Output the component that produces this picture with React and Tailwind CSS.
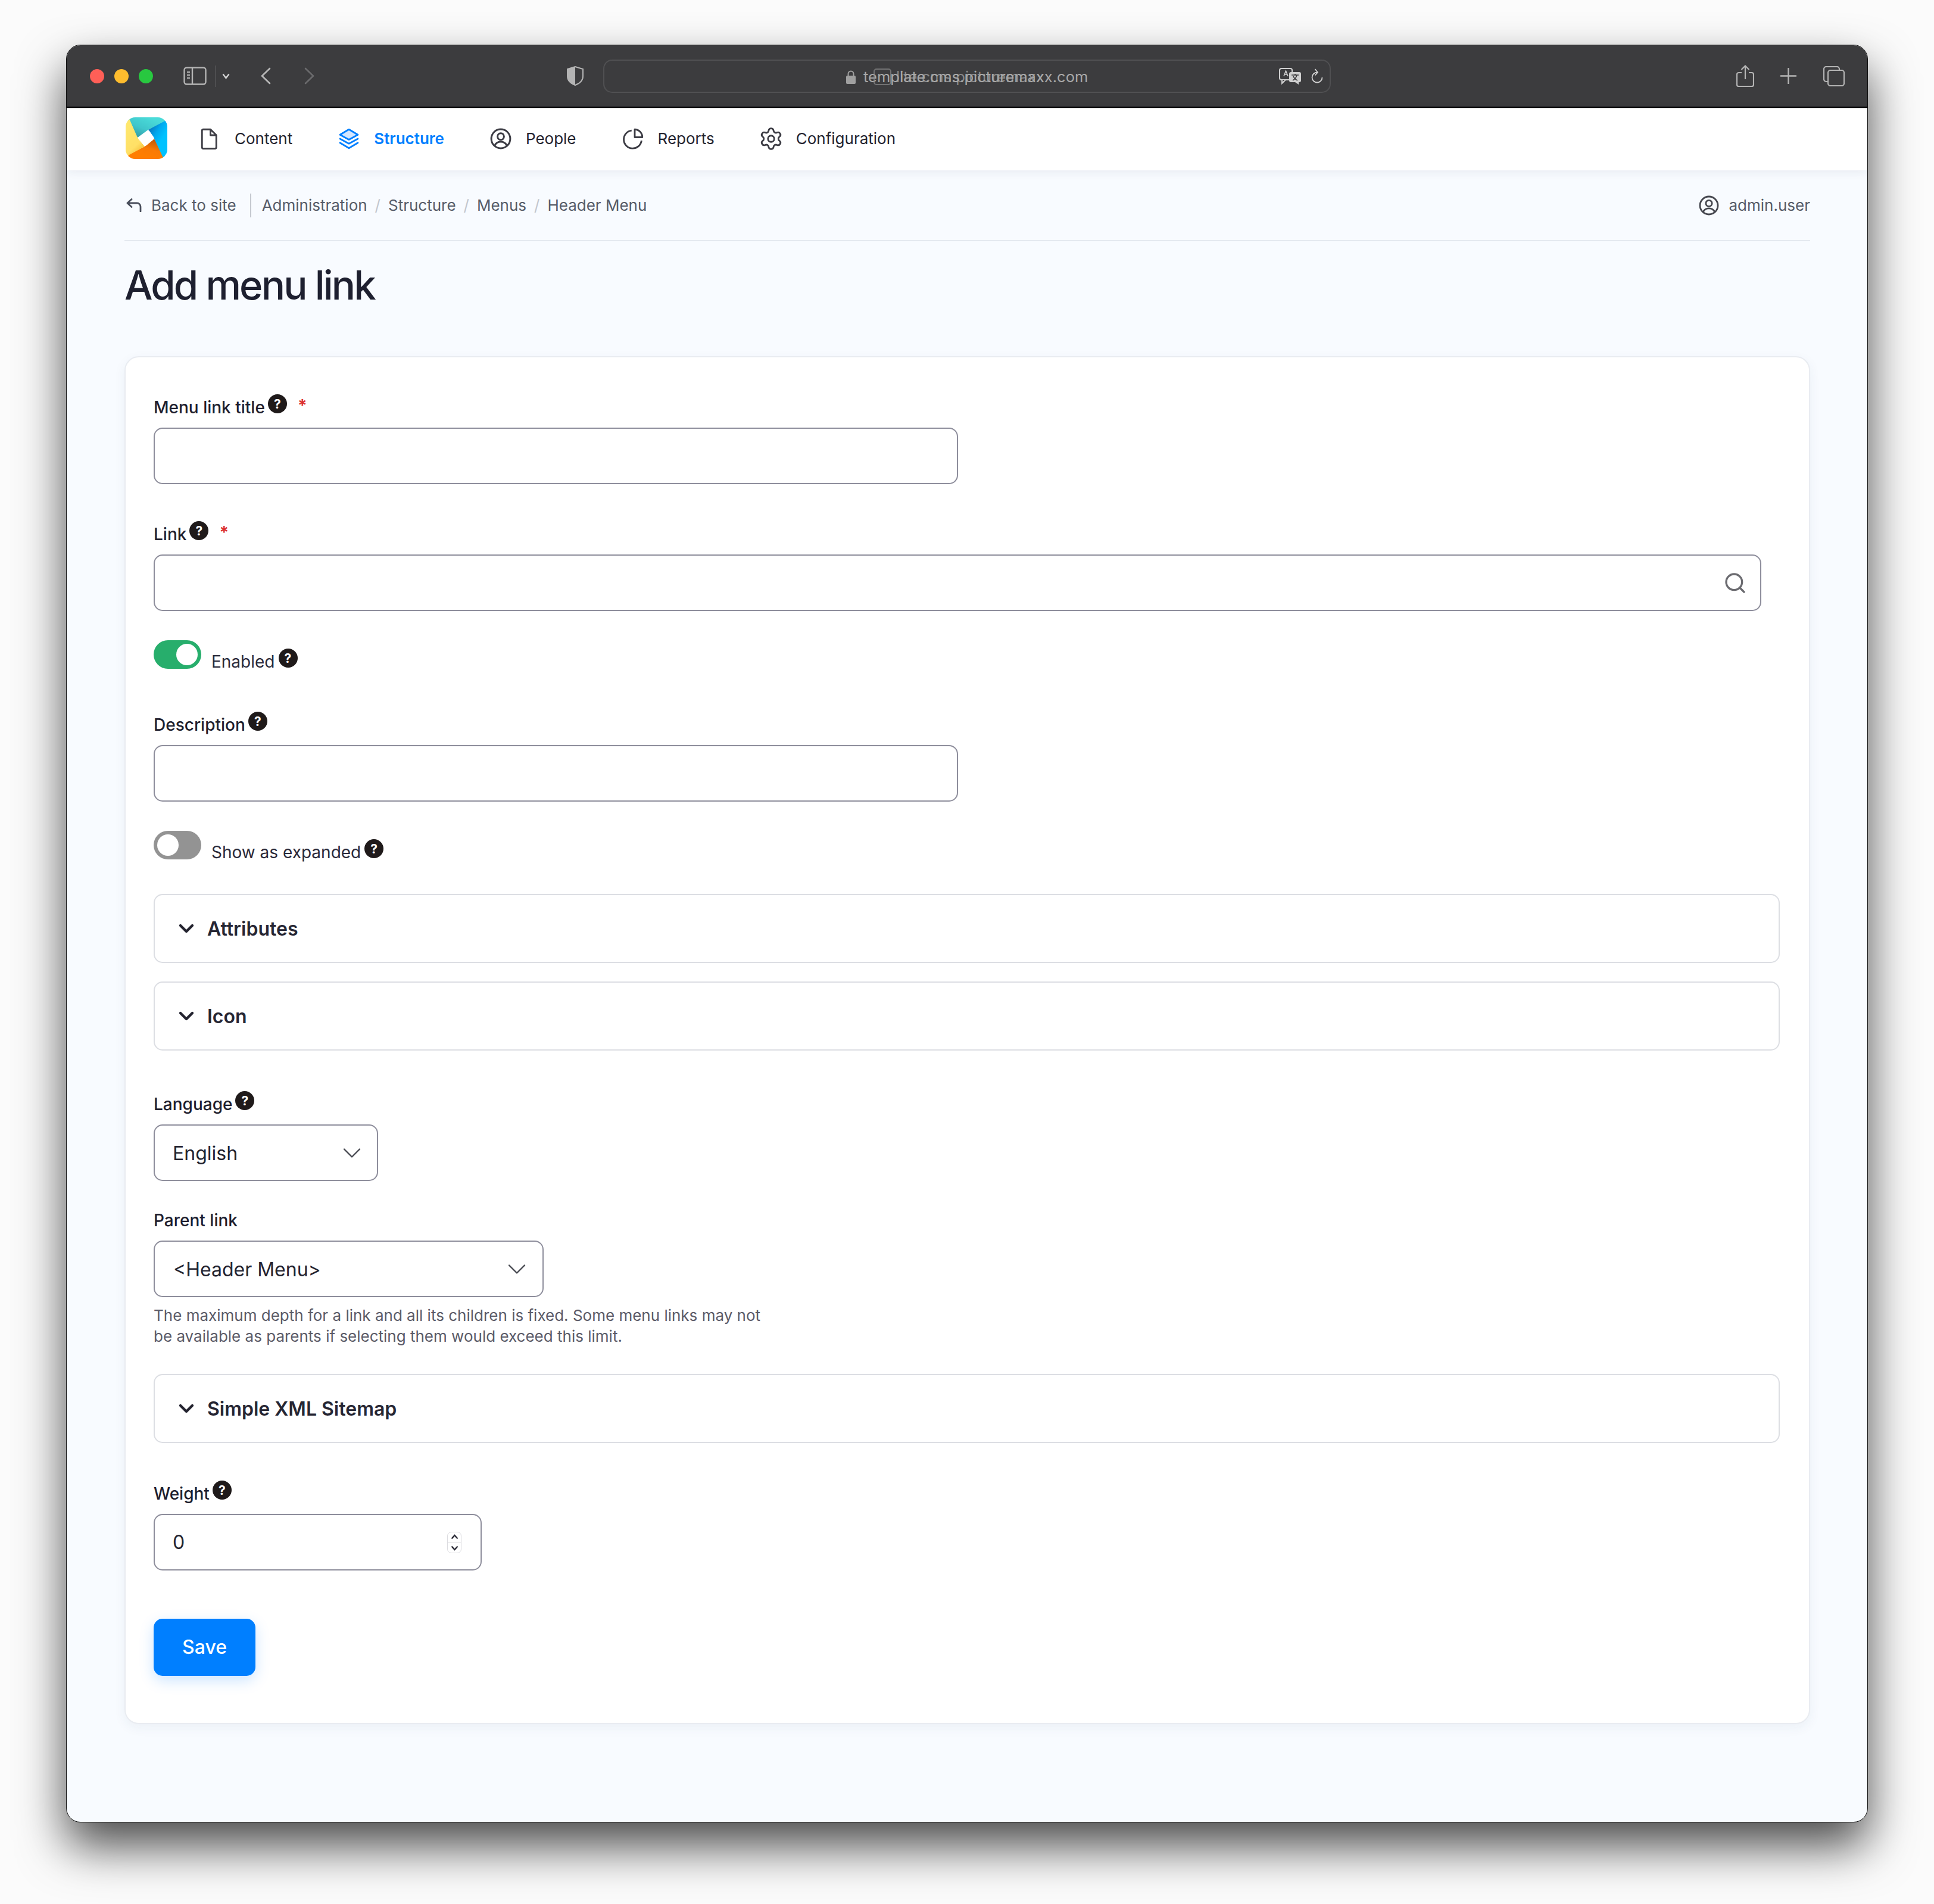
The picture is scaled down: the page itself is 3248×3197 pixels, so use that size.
import { ChevronDown, Search, Settings } from "lucide-react";

function Help() {
  return (
    <span className="flex h-8 w-8 shrink-0 items-center justify-center rounded-full bg-[#1f1a1a] text-[21px] font-bold leading-none text-white">
      ?
    </span>
  );
}

function Label({ children, help, required, className = "" }) {
  return (
    <div className={`flex h-9 items-start text-[28px] font-medium text-[#1e1e2e] ${className}`}>
      <span className="mt-[6px] leading-8">{children}</span>
      {help && <span className="ml-[5px]"><Help /></span>}
      {required && <span className="ml-[18px] mt-[3px] text-[28px] font-bold leading-8 text-[#dc2f2f]">*</span>}
    </div>
  );
}

function Toggle({ on, label, className = "" }) {
  return (
    <div className={`flex h-12 items-start ${className}`}>
      <div className={`flex h-12 w-20 items-center rounded-full px-[6px] ${on ? "justify-end bg-[#27ae6c]" : "justify-start bg-[#939393]"}`}>
        <span className="h-9 w-9 rounded-full bg-white" />
      </div>
      <span className="ml-[17px] mt-5 text-[28px] leading-8 text-[#2a2a3a]">{label}</span>
      <span className="ml-[6px] mt-[14px]"><Help /></span>
    </div>
  );
}

function Accordion({ title, className = "" }) {
  return (
    <div className={`flex h-[116px] w-[2731px] items-center rounded-[15px] border-2 border-[#dcdee3] pl-[33px] ${className}`}>
      <ChevronDown size={40} strokeWidth={2.6} className="text-[#23232f]" />
      <span className="ml-[15px] pt-[2px] text-[32px] font-semibold text-[#262633]">{title}</span>
    </div>
  );
}

function TextBox({ className = "", children }) {
  return (
    <div className={`flex h-[95px] items-center rounded-[15px] border-2 border-[#8e8e9c] bg-white ${className}`}>
      {children}
    </div>
  );
}

function Logo() {
  return (
    <svg width="70" height="70" viewBox="0 0 70 70">
      <defs>
        <clipPath id="logoClip"><rect width="70" height="70" rx="16" /></clipPath>
        <linearGradient id="teal" x1="0" y1="0.9" x2="0.7" y2="0.1">
          <stop offset="0" stopColor="#2f8f9c" />
          <stop offset="0.5" stopColor="#3fc6cb" />
          <stop offset="1" stopColor="#4adbd9" />
        </linearGradient>
        <linearGradient id="sky" x1="0.1" y1="0" x2="0.6" y2="0.6">
          <stop offset="0" stopColor="#0d5fa8" />
          <stop offset="0.6" stopColor="#00a8ee" />
          <stop offset="1" stopColor="#00c2ff" />
        </linearGradient>
        <linearGradient id="orange" x1="0.8" y1="0" x2="0.4" y2="0.8">
          <stop offset="0" stopColor="#b9540a" />
          <stop offset="0.6" stopColor="#f97a05" />
          <stop offset="1" stopColor="#ff7d00" />
        </linearGradient>
        <linearGradient id="yellow" x1="0.2" y1="0" x2="0.6" y2="1">
          <stop offset="0" stopColor="#ffe96f" />
          <stop offset="0.7" stopColor="#ffe066" />
          <stop offset="1" stopColor="#f2b92c" />
        </linearGradient>
      </defs>
      <g clipPath="url(#logoClip)">
        <polygon points="0,0 70,0 70,6 38,21 20,34" fill="url(#teal)" />
        <polygon points="70,4 70,70 62,70 48,36 38,21" fill="url(#sky)" />
        <polygon points="48,36 64,70 0,70 6,62 32,49" fill="url(#orange)" />
        <polygon points="0,0 5,0 20,34 32,49 6,63 0,70" fill="url(#yellow)" />
        <path d="M36 22.5 Q38.5 21 40 23 L47 33 Q48.5 36 46 38 L35 47 Q32.5 49 30.5 47 L22 37 Q20 34.5 22.5 32.5 Z" fill="#fff" />
      </g>
    </svg>
  );
}

function NavItem({ icon, label, active }) {
  return (
    <div className={`flex items-center text-[26px] ${active ? "font-semibold text-[#007fff]" : "text-[#23232f]"}`}>
      {icon}
      <span className="ml-6">{label}</span>
    </div>
  );
}

function UserIcon({ size = 36 }) {
  return (
    <svg width={size} height={size} viewBox="0 0 24 24" fill="none" stroke="currentColor" strokeWidth="2">
      <circle cx="12" cy="12" r="10.6" />
      <circle cx="12" cy="9.5" r="3.6" />
      <path d="M5.2 19.8c1.2-3 3.8-4.4 6.8-4.4s5.600 1.400 6.800 4.400" />
    </svg>
  );
}

export default function App() {
  return (
    <div className="min-h-[3197px] w-[3248px] bg-[#fbfbfb] pl-[111px] pt-[75px] font-['Inter',sans-serif]">
      <div className="h-[2985px] w-[3026px] overflow-hidden rounded-[24px] border border-[#111111] bg-[#f8fbff] shadow-[0_40px_80px_rgba(0,0,0,0.7)]">
        {/* TITLE BAR */}
        <div className="flex h-[105px] items-center border-b-2 border-black bg-[#3c3c3e] pl-[39px]">
          <span className="h-6 w-6 rounded-full bg-[#ff5f57]" />
          <span className="ml-[17px] h-6 w-6 rounded-full bg-[#febc2e]" />
          <span className="ml-[17px] h-6 w-6 rounded-full bg-[#28c840]" />
          <svg className="ml-[51px]" width="39" height="31" viewBox="0 0 39 31" fill="none" stroke="#b4b4b4" strokeWidth="2.4">
            <rect x="1.500" y="1.500" width="36" height="28" rx="4" />
            <path d="M15 2v27" />
            <path d="M6 9h5M6 14h5M6 19h5" strokeWidth="1.800" />
          </svg>
          <span className="ml-[14px] h-9 w-[2px] bg-[#4e4e50]" />
          <svg className="ml-[10px]" width="13" height="10" viewBox="0 0 13 10" fill="none" stroke="#d0d0d0" strokeWidth="2.400">
            <path d="M1.500 1.500 6.500 8l5-6.500" />
          </svg>
          <svg className="ml-[52px]" width="17" height="29" viewBox="0 0 17 29" fill="none" stroke="#b8b8b8" strokeWidth="2.600" strokeLinecap="round">
            <path d="M15 2 2 14.500 15 27" />
          </svg>
          <svg className="ml-[56px]" width="17" height="29" viewBox="0 0 17 29" fill="none" stroke="#6b6b6d" strokeWidth="2.600" strokeLinecap="round">
            <path d="M2 2 15 14.500 2 27" />
          </svg>
          <svg className="ml-[424px]" width="28" height="33" viewBox="0 0 28 33" fill="none">
            <path d="M14 1 27 5v12c0 7-5 12-13 15C6 29 1 24 1 17V5z" fill="#3c3c3e" stroke="#b4b4b4" strokeWidth="2" />
            <path d="M14 1 1 5v12c0 7 5 12 13 15z" fill="#b4b4b4" />
          </svg>

          {/* ADDRESS BAR */}
          <div className="relative ml-[33px] flex h-14 w-[1222px] items-center rounded-[15px] border-2 border-[#505052] pl-[406px] pr-[11px] text-[25.5px] text-[#a8a8a8]">
            <svg width="16" height="23" viewBox="0 0 16 23" fill="none" className="mt-1">
              <path d="M3.500 10V6a4.500 4.500 0 0 1 9 0v4" stroke="#a0a0a0" strokeWidth="2" />
              <rect y="9" width="16" height="14" rx="2" fill="#a0a0a0" />
            </svg>
            <span className="ml-[13px] mt-[3px]">template.cms.picturemaxx.com</span>
            <svg className="ml-auto" width="38" height="28" viewBox="0 0 38 28">
              <rect x="1" y="1" width="21" height="19" rx="3" fill="#3c3c3e" stroke="#d0d0d0" strokeWidth="2" />
              <path d="M5 20v6l6-6" fill="#3c3c3e" stroke="#d0d0d0" strokeWidth="2" />
              <rect x="17" y="7" width="20" height="17" rx="3" fill="#d0d0d0" />
              <path d="M33 24v4l-6-4z" fill="#d0d0d0" />
              <path d="M8 14l3.500-9 3.500 9M9 11h5" fill="none" stroke="#d0d0d0" strokeWidth="1.600" />
              <path d="M21 12h12M27 10v2M23 21c4-2 6-5 7-9M31 21c-4-2-6-4-7-7" fill="none" stroke="#3c3c3e" strokeWidth="1.600" />
            </svg>
            <svg className="ml-[16px]" width="20" height="25" viewBox="0 0 20 25" fill="none" stroke="#d0d0d0" strokeWidth="1.800">
              <path d="M18.500 15a8.500 8.500 0 1 1-8.500-8.500" />
              <path d="M6.500 1l4.500 5.500-4.500 5" />
            </svg>
            <div className="absolute left-[452px] top-[8px] flex items-center opacity-70">
              <span className="h-7 w-[30px] rounded-[5px] border-2 border-[#8a8a8a]" />
              <span className="ml-[8px] whitespace-nowrap">lite.cms.picturemaxx</span>
            </div>
          </div>

          <svg className="ml-[681px]" width="30" height="37" viewBox="0 0 30 37" fill="none" stroke="#b4b4b4" strokeWidth="2.200">
            <path d="M9 13H4a3 3 0 0 0-3 3v17a3 3 0 0 0 3 3h22a3 3 0 0 0 3-3V16a3 3 0 0 0-3-3h-5" />
            <path d="M15 24V2M8.500 8 15 1.500 21.500 8" />
          </svg>
          <svg className="ml-[44px]" width="27" height="27" viewBox="0 0 27 27" stroke="#b4b4b4" strokeWidth="2.400">
            <path d="M13.500 0v27M0 13.500h27" />
          </svg>
          <svg className="ml-[45px]" width="36" height="34" viewBox="0 0 36 34" fill="none" stroke="#b4b4b4" strokeWidth="2.200">
            <rect x="8" y="7" width="27" height="26" rx="4" />
            <path d="M8 26H5a4 4 0 0 1-4-4V5a4 4 0 0 1 4-4h18a4 4 0 0 1 4 4v2" />
          </svg>
        </div>

        {/* NAV */}
        <div className="relative flex h-[105px] items-center gap-[77px] border-t border-[#c9c9c9] bg-white pb-[3px] pl-[99px] shadow-[0_4px_16px_rgba(30,40,70,0.07)]">
          <div className="mb-[2px] mr-[-24px]"><Logo /></div>
          <NavItem
            label="Content"
            icon={
              <svg width="36" height="36" viewBox="0 0 24 24" fill="none" stroke="#3c3c44" strokeWidth="1.900" strokeLinejoin="round">
                <path d="M3.500 3A1.500 1.500 0 0 1 5 1.500h8l6.500 6.500v13.500A1.500 1.500 0 0 1 18 23H5a1.500 1.500 0 0 1-1.500-1.500z" />
                <path d="M13 1.500V8h6.500" />
              </svg>
            }
          />
          <NavItem
            active
            label="Structure"
            icon={
              <svg width="36" height="36" viewBox="0 0 24 24" fill="none" stroke="#007fff" strokeWidth="1.800" strokeLinejoin="round" strokeLinecap="round">
                <path d="M12 1.500 22 7.500 12 13 2 7.500z" fill="#d4e6ff" />
                <path d="M2 12l10 5.500L22 12M2 16.500 12 22.500l10-6" />
              </svg>
            }
          />
          <NavItem label="People" icon={<span className="text-[#3c3c44]"><UserIcon /></span>} />
          <NavItem
            label="Reports"
            icon={
              <svg width="36" height="36" viewBox="0 0 24 24" fill="none" stroke="#3c3c44" strokeWidth="1.900" strokeLinejoin="round">
                <path d="M10.500 2.800A10 10 0 1 0 21.600 14" />
                <path d="M14 1.500a8.800 8.800 0 0 1 8.500 8.800H14z" />
              </svg>
            }
          />
          <NavItem label="Configuration" icon={<Settings size={42} strokeWidth={1.6} className="-mx-[3px] text-[#3c3c44]" />} />
        </div>

        {/* PAGE */}
        <div className="pl-[97px] pr-[96px]">
          <div className="flex h-[119px] items-center border-b-2 border-[#e4e9f0] pl-[3px] text-[26px] text-[#565b68]">
            <svg width="26" height="23" viewBox="0 0 26 23" fill="none" stroke="#4a4f5c" strokeWidth="2.800" strokeLinecap="round" strokeLinejoin="round">
              <path d="M9 1.500 2 8l7 6.500M2 8h16a6 6 0 0 1 6 6v8" />
            </svg>
            <span className="ml-4">Back to site</span>
            <span className="ml-[23px] h-10 w-[2px] bg-[#c5c9d0]" />
            <span className="ml-[18px]">Administration</span>
            <span className="mx-[13px] text-[#c2c6cd]">/</span>
            <span>Structure</span>
            <span className="mx-[13px] text-[#c2c6cd]">/</span>
            <span>Menus</span>
            <span className="mx-[13px] text-[#c2c6cd]">/</span>
            <span>Header Menu</span>
            <span className="ml-auto text-[#45474f]"><UserIcon size={34} /></span>
            <span className="ml-[17px]">admin.user</span>
          </div>

          <h1 className="mt-[34px] text-[67px] font-medium leading-[80px] tracking-[-0.042em] text-[#1e2030]">Add menu link</h1>

          {/* FORM */}
          <div className="mt-[79px] h-[2297px] rounded-[24px] border-2 border-[#e9ecf1] bg-white pl-[47px] pt-[62px] shadow-[0_6px_20px_rgba(40,60,110,0.06)]">
            <Label help required>Menu link title</Label>
            <TextBox className="mt-5 w-[1351px]" />

            <Label help required className="mt-[62px]">Link</Label>
            <TextBox className="mt-5 w-[2700px] justify-end pr-[22px]">
              <Search size={40} strokeWidth={2} className="text-[#6b6b70]" />
            </TextBox>

            <Toggle on label="Enabled" className="mt-[49px]" />

            <Label help className="mt-[72px]">Description</Label>
            <TextBox className="mt-5 w-[1351px]" />

            <Toggle label="Show as expanded" className="mt-[49px]" />

            <Accordion title="Attributes" className="mt-[58px]" />
            <Accordion title="Icon" className="mt-[31px]" />

            <Label help className="mt-[68px]">Language</Label>
            <TextBox className="mt-5 w-[377px] pl-[30px] pr-[16px] text-[32px] text-[#23232f]">
              <span className="pt-[2px]">English</span>
              <ChevronDown size={52} strokeWidth={1.1} className="ml-auto text-[#45474f]" />
            </TextBox>

            <Label className="mt-[44px]">Parent link</Label>
            <TextBox className="mt-5 w-[655px] pl-[31px] pr-[17px] text-[32px] text-[#23232f]">
              <span className="pt-[2px]">&lt;Header Menu&gt;</span>
              <ChevronDown size={52} strokeWidth={1.1} className="ml-auto text-[#45474f]" />
            </TextBox>
            <p className="mt-[14px] w-[1030px] text-[26px] leading-[34.500px] text-[#5b5b68]">
              The maximum depth for a link and all its children is fixed. Some menu links may not be available as parents if selecting them would exceed this limit.
            </p>

            <Accordion title="Simple XML Sitemap" className="mt-[46px]" />

            <Label help className="mt-[63px]">Weight</Label>
            <TextBox className="mt-5 w-[551px] pl-[30px] pr-[32px] text-[32px] text-[#23232f]">
              <span>0</span>
              <div className="ml-auto flex h-9 w-6 flex-col items-center justify-between rounded-[7px] border border-[#dcdce0] py-[3px]">
                <svg width="13" height="9" viewBox="0 0 13 9" fill="none" stroke="#23232f" strokeWidth="2.200"><path d="M1.500 7.500 6.500 2l5 5.500" /></svg>
                <span className="h-px w-full bg-[#dcdce0]" />
                <svg width="13" height="9" viewBox="0 0 13 9" fill="none" stroke="#23232f" strokeWidth="2.200"><path d="M1.500 1.500 6.500 7l5-5.500" /></svg>
              </div>
            </TextBox>

            <button className="mt-[81px] flex h-[96px] w-[171px] items-center justify-center rounded-[15px] bg-[#007fff] text-[32px] font-medium text-white shadow-[0_8px_24px_rgba(0,127,255,0.2)]">
              Save
            </button>
          </div>
        </div>
      </div>
    </div>
  );
}
